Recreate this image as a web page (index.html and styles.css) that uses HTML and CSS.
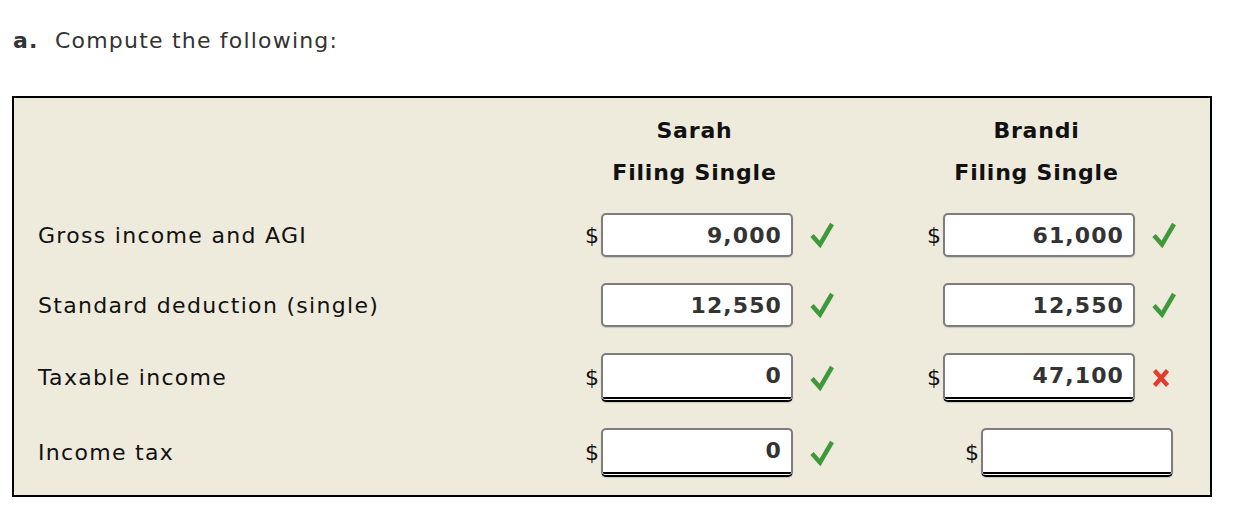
FILE: index.html
```html
<!DOCTYPE html>
<html>
<head>
<meta charset="utf-8">
<link rel="stylesheet" href="styles.css">
</head>
<body>
<div class="page">
  <p class="title"><b>a.</b>&nbsp; Compute the following:</p>
  <div class="box">
    <div class="row head">
      <div class="label"></div>
      <div class="hcell">Sarah<br>Filing Single</div>
      <div class="hcell">Brandi<br>Filing Single</div>
    </div>
    <div class="row">
      <div class="label">Gross income and AGI</div>
      <div class="cell"><span class="dollar">$</span><span class="inp">9,000</span><span class="mark"><svg class="ok" viewBox="0 0 24 26"><path d="M2 13.5 L10 22.5 L22 2" /></svg></span></div>
      <div class="cell"><span class="dollar">$</span><span class="inp">61,000</span><span class="mark"><svg class="ok" viewBox="0 0 24 26"><path d="M2 13.5 L10 22.5 L22 2" /></svg></span></div>
    </div>
    <div class="row">
      <div class="label">Standard deduction (single)</div>
      <div class="cell"><span class="dollar"></span><span class="inp">12,550</span><span class="mark"><svg class="ok" viewBox="0 0 24 26"><path d="M2 13.5 L10 22.5 L22 2" /></svg></span></div>
      <div class="cell"><span class="dollar"></span><span class="inp">12,550</span><span class="mark"><svg class="ok" viewBox="0 0 24 26"><path d="M2 13.5 L10 22.5 L22 2" /></svg></span></div>
    </div>
    <div class="row">
      <div class="label">Taxable income</div>
      <div class="cell"><span class="dollar">$</span><span class="inp total">0</span><span class="mark"><svg class="ok" viewBox="0 0 24 26"><path d="M2 13.5 L10 22.5 L22 2" /></svg></span></div>
      <div class="cell"><span class="dollar">$</span><span class="inp total">47,100</span><span class="mark"><svg class="bad" viewBox="0 0 18 20"><path d="M2.5 2.5 L15.5 17.5 M15.5 2.5 L2.5 17.5" /></svg></span></div>
    </div>
    <div class="row">
      <div class="label">Income tax</div>
      <div class="cell"><span class="dollar">$</span><span class="inp total">0</span><span class="mark"><svg class="ok" viewBox="0 0 24 26"><path d="M2 13.5 L10 22.5 L22 2" /></svg></span></div>
      <div class="cell shifted"><span class="dollar">$</span><span class="inp total"></span><span class="mark"></span></div>
    </div>
  </div>
</div>
</body>
</html>
```

FILE: styles.css
```css
html, body {
  margin: 0;
  padding: 0;
  background: #ffffff;
}

.page {
  padding: 26px 0 0 12px;
  font-family: "DejaVu Sans", Verdana, sans-serif;
  color: #111;
}

.title {
  margin: 0;
  font-size: 22px;
  line-height: 30px;
  color: #333;
  padding-left: 1px;
  letter-spacing: 1.2px;
}

.title b {
  color: #333;
}

.box {
  margin-top: 40px;
  width: 1196px;
  border: 2px solid #000;
  background: #eeebdd;
  padding: 12px 0 18px 0;
}

.row {
  display: grid;
  grid-template-columns: 512px 342px 342px;
  align-items: center;
}

.row + .row {
  margin-top: 26px;
}

.row.head + .row {
  margin-top: 19px;
}

.label {
  padding-left: 24px;
  font-size: 22px;
  color: #111;
  letter-spacing: 1.3px;
}

.hcell {
  text-align: center;
  font-weight: bold;
  font-size: 22px;
  line-height: 42px;
  padding-right: 5px;
  color: #111;
  letter-spacing: 0.8px;
}

.cell {
  display: grid;
  grid-template-columns: 1fr 192px 1fr;
  align-items: center;
}

.cell.shifted {
  padding-left: 76px;
}

.dollar {
  justify-self: end;
  font-size: 22px;
  color: #111;
  padding-right: 2px;
}

.inp {
  box-sizing: border-box;
  height: 44px;
  border: 2px solid #7d7d7d;
  border-radius: 5px;
  background: #fff;
  text-align: right;
  padding-right: 9px;
  font-size: 22px;
  font-weight: bold;
  line-height: 42px;
  color: #333;
  letter-spacing: 1.1px;
  box-shadow: 0 1px 1px rgba(0,0,0,0.15);
}

.inp.total {
  height: 49px;
  border-bottom: 5px double #000;
}

.mark {
  justify-self: start;
  padding-left: 17px;
  display: flex;
  align-items: center;
}

.ok {
  width: 24px;
  height: 26px;
  fill: none;
  stroke: #3f993a;
  stroke-width: 4.5;
  stroke-linecap: butt;
  stroke-linejoin: miter;
}

.bad {
  width: 18px;
  height: 20px;
  fill: none;
  stroke: #e63a2e;
  stroke-width: 4.2;
}
```
